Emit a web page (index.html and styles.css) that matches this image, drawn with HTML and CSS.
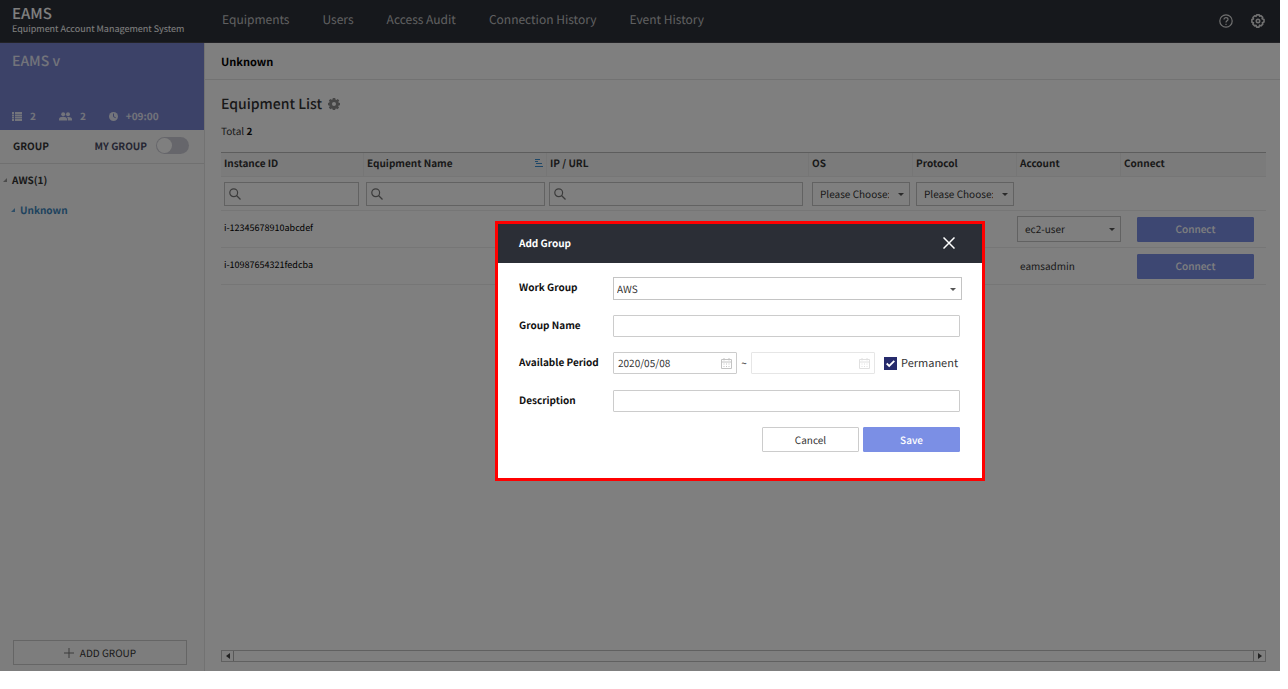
FILE: index.html
```html
<!doctype html>
<html lang="en">
  <head>
    <meta charset="UTF-8" />
    <meta name="viewport" content="width=device-width, initial-scale=1.0" />
    <title>EAMS - Equipment List</title>
    <link rel="stylesheet" href="styles.css">
  </head>
  <body>
    <div class="app">
      <header class="topbar">
        <div class="brand">
          <div class="brand-name">EAMS</div>
          <div class="brand-sub">Equipment Account Management System</div>
        </div>
        <nav class="nav">
          <a href="#">Equipments</a>
          <a href="#">Users</a>
          <a href="#">Access Audit</a>
          <a href="#">Connection History</a>
          <a href="#">Event History</a>
        </nav>
        <div class="top-icons">
          <button type="button" aria-label="Help">
            <svg width="14" height="14" viewBox="0 0 14 14" fill="none" stroke="currentColor" stroke-width="1.2">
              <circle cx="7" cy="7" r="6.2" />
              <path d="M5 5.6c0-1.300.9-2 2-2s2 .8 2 1.800c0 1.400-2 1.500-2 3.100" />
              <path d="M7 9.700v1.200" />
            </svg>
          </button>
          <button type="button" aria-label="Settings">
            <svg width="14" height="14" viewBox="0 0 14 14" fill="none" stroke="currentColor" stroke-width="1.600" stroke-linejoin="round">
              <path d="M5.700.9h2.600l.4 1.300 1.200-.6 1.800 1.800-.6 1.300 1.900.8v2.600l-1.700.6.500 1.400-1.800 1.800-1.400-.7-.6 1.900H5.600L5 11.300l-1.300.6-1.800-1.800.6-1.400L.9 8.200V5.600l1.600-.7-.6-1.400 1.800-1.800 1.300.6z" />
              <circle cx="7" cy="7" r="1.700" />
            </svg>
          </button>
        </div>
      </header>

      <div class="body">
        <aside class="sidebar">
          <div class="company">
            <div class="company-name">EAMS v</div>
            <div class="stats">
              <span class="stat">
                <svg width="10" height="9" viewBox="0 0 10 9" fill="currentColor">
                  <path d="M0 0h2v2H0zM3 0h7v2H3zM0 2.400h2v1.800H0zM3 2.400h7v1.800H3zM0 4.700h2v1.800H0zM3 4.700h7v1.800H3zM0 7h2v2H0zM3 7h7v2H3z" />
                </svg>
                2
              </span>
              <span class="stat">
                <svg width="13" height="9" viewBox="0 0 13 9" fill="currentColor">
                  <circle cx="4.200" cy="2.200" r="2" />
                  <circle cx="9" cy="2.200" r="2" />
                  <path d="M0 8.500V7c0-1.500 2-2.200 4-2.200S8 5.500 8 7v1.500zM8.800 8.500V7c0-.8-.3-1.400-.9-1.900C10.400 4.600 13 5.300 13 7v1.500z" />
                </svg>
                2
              </span>
              <span class="stat">
                <svg width="9" height="9" viewBox="0 0 9 9">
                  <circle cx="4.500" cy="4.500" r="4.500" fill="currentColor" />
                  <path d="M4.500 1.500v3.200l2.200 1" fill="none" stroke="#7884d0" stroke-width="1" />
                </svg>
                +09:00
              </span>
            </div>
          </div>
          <div class="group-bar">
            <span>GROUP</span>
            <label class="my-group">MY GROUP <input type="checkbox" class="toggle" /></label>
          </div>
          <ul class="tree">
            <li class="tree-root">AWS(1)</li>
            <li class="tree-child">Unknown</li>
          </ul>
          <button type="button" class="add-group">
            <svg width="10" height="10" viewBox="0 0 10 10" stroke="currentColor"><path d="M5 0v10M0 5h10" /></svg>
            ADD GROUP
          </button>
        </aside>

        <main class="main">
          <div class="crumb">Unknown</div>
          <div class="content">
            <h1 class="title">
              Equipment List
              <svg width="12" height="12" viewBox="0 0 12 12" fill="currentColor" fill-rule="evenodd">
                <path d="M4.800 0h2.400l.3 1.500.9.400L9.700 1 11.300 2.600l-1 1.200.4.900 1.300.2v2.300l-1.400.3-.4.900.9 1.200-1.600 1.600-1.300-.8-.8.400-.3 1.400H4.800l-.3-1.400-.8-.4-1.300.8L.8 9.600l.8-1.200-.3-.9L0 7.200V4.900l1.300-.3.3-.8-.8-1.200L2.400 1l1.300.8.800-.3zM6 4a2 2 0 100 4 2 2 0 000-4z" />
              </svg>
            </h1>
            <p class="total">Total <b>2</b></p>

            <table class="grid">
              <colgroup>
                <col class="col-id" />
                <col class="col-name" />
                <col />
                <col class="col-os" />
                <col class="col-os" />
                <col class="col-os" />
                <col class="col-connect" />
              </colgroup>
              <thead>
                <tr>
                  <th>Instance ID</th>
                  <th>
                    <div class="sorted">
                      Equipment Name
                      <svg width="8" height="8" viewBox="0 0 8 8" stroke="currentColor"><path d="M0 .5h5M0 2.500h3M1 4.500h6M0 7.500h8" /></svg>
                    </div>
                  </th>
                  <th>IP / URL</th>
                  <th>OS</th>
                  <th>Protocol</th>
                  <th>Account</th>
                  <th>Connect</th>
                </tr>
              </thead>
              <tbody>
                <tr class="filters">
                  <td>
                    <div class="search">
                      <svg width="12" height="12" viewBox="0 0 12 12" fill="none" stroke="currentColor" stroke-width="1.200"><circle cx="4.700" cy="4.700" r="3.900" /><path d="M7.500 7.500l4 4" /></svg>
                      <input type="text" aria-label="Instance ID" />
                    </div>
                  </td>
                  <td>
                    <div class="search">
                      <svg width="12" height="12" viewBox="0 0 12 12" fill="none" stroke="currentColor" stroke-width="1.200"><circle cx="4.700" cy="4.700" r="3.900" /><path d="M7.500 7.500l4 4" /></svg>
                      <input type="text" aria-label="Equipment Name" />
                    </div>
                  </td>
                  <td>
                    <div class="search">
                      <svg width="12" height="12" viewBox="0 0 12 12" fill="none" stroke="currentColor" stroke-width="1.200"><circle cx="4.700" cy="4.700" r="3.900" /><path d="M7.500 7.500l4 4" /></svg>
                      <input type="text" aria-label="IP / URL" />
                    </div>
                  </td>
                  <td>
                    <div class="select"><select aria-label="OS"><option>Please Choose:</option></select></div>
                  </td>
                  <td>
                    <div class="select"><select aria-label="Protocol"><option>Please Choose:</option></select></div>
                  </td>
                  <td></td>
                  <td></td>
                </tr>
                <tr>
                  <td class="instance">i-12345678910abcdef</td>
                  <td></td>
                  <td></td>
                  <td></td>
                  <td></td>
                  <td class="account">
                    <div class="select"><select aria-label="Account"><option>ec2-user</option></select></div>
                  </td>
                  <td class="connect"><button type="button" class="btn btn-primary">Connect</button></td>
                </tr>
                <tr>
                  <td class="instance">i-10987654321fedcba</td>
                  <td></td>
                  <td></td>
                  <td></td>
                  <td></td>
                  <td>eamsadmin</td>
                  <td class="connect"><button type="button" class="btn btn-primary">Connect</button></td>
                </tr>
              </tbody>
            </table>

            <div class="hscroll">
              <button type="button" class="hscroll-left" aria-label="Scroll left"></button>
              <div class="hscroll-track"></div>
              <button type="button" class="hscroll-right" aria-label="Scroll right"></button>
            </div>
          </div>
        </main>
      </div>

      <div class="overlay"></div>

      <section class="modal" role="dialog" aria-labelledby="modal-title">
        <header class="modal-head">
          <h2 id="modal-title">Add Group</h2>
          <button type="button" aria-label="Close">
            <svg width="12" height="12" viewBox="0 0 12 12" stroke="currentColor" stroke-width="1.500"><path d="M.5.5l11 11M11.500.5l-11 11" /></svg>
          </button>
        </header>
        <form class="form">
          <label for="work-group">Work Group</label>
          <div class="select select-wide">
            <select id="work-group"><option>AWS</option></select>
          </div>

          <label for="group-name">Group Name</label>
          <input type="text" class="text" id="group-name" />

          <label for="start-date">Available Period</label>
          <div class="period">
            <div class="date">
              <input type="text" id="start-date" value="2020/05/08" />
              <svg width="11" height="11" viewBox="0 0 11 11" fill="none" stroke="currentColor"><path d="M.5 1.500h10v9H.5zM.5 4h10M3 0v2.500M8 0v2.500" /><path d="M2.500 6h6M2.500 8.500h6" stroke-dasharray="1 1.500" /></svg>
            </div>
            <span class="tilde">~</span>
            <div class="date date-disabled">
              <input type="text" aria-label="End date" disabled />
              <svg width="11" height="11" viewBox="0 0 11 11" fill="none" stroke="currentColor"><path d="M.5 1.500h10v9H.5zM.5 4h10M3 0v2.500M8 0v2.500" /><path d="M2.500 6h6M2.500 8.500h6" stroke-dasharray="1 1.500" /></svg>
            </div>
            <label class="permanent">
              <span class="check">
                <input type="checkbox" checked />
                <svg width="9" height="9" viewBox="0 0 9 9" fill="none" stroke="#fff" stroke-width="1.800"><path d="M.7 4.500l2.500 2.500L8.300 1.800" /></svg>
              </span>
              Permanent
            </label>
          </div>

          <label for="description">Description</label>
          <input type="text" class="text" id="description" />

          <div class="actions">
            <button type="button" class="btn">Cancel</button>
            <button type="button" class="btn btn-primary">Save</button>
          </div>
        </form>
      </section>
    </div>
  </body>
</html>
```
FILE: styles.css
```css
* {
  box-sizing: border-box;
}
body {
  margin: 0;
  background: #fff;
  color: #333;
  font: 10px/16px "Noto Sans CJK KR", "Noto Sans", sans-serif;
  text-rendering: geometricPrecision;
}
button,
input,
select {
  font: inherit;
  color: inherit;
  text-rendering: inherit;
  margin: 0;
  padding: 0;
  border: 0;
  background: none;
}
a {
  color: inherit;
  text-decoration: none;
}
svg {
  display: block;
  flex: none;
}
.app {
  position: relative;
  display: flex;
  flex-direction: column;
  min-height: calc(100vh - 18px);
  margin: 0 8px 18px 0;
}

/* top bar */
.topbar {
  display: flex;
  height: 43px;
  padding: 0 15px 0 12px;
  background: #2c3038;
  border-bottom: 1px solid #45454c;
  color: #fff;
}
.brand {
  width: 210px;
  padding-top: 4px;
}
.brand-name {
  font-size: 15px;
  line-height: 20px;
  font-weight: 500;
}
.brand-sub {
  font-size: 9px;
  line-height: 9px;
  white-space: nowrap;
}
.nav {
  display: flex;
  flex: 1;
  gap: 33px;
  padding-top: 12px;
  font-size: 12px;
  color: #c0c0c2;
}
.top-icons {
  display: flex;
  align-items: center;
  gap: 18px;
  color: #e0e0e0;
}

.body {
  display: flex;
  flex: 1;
}

/* sidebar */
.sidebar {
  display: flex;
  flex-direction: column;
  width: 205px;
  background: #fafafa;
  border-right: 1px solid #e4e4e4;
}
.company {
  display: flex;
  flex-direction: column;
  justify-content: space-between;
  height: 87px;
  padding: 10px 12px 6px;
  background: #7884d0;
  color: #e6e8f6;
}
.company-name {
  font-size: 14px;
  font-weight: 500;
}
.stats {
  display: flex;
  gap: 23px;
  font-weight: 700;
}
.stat {
  display: flex;
  align-items: center;
  gap: 8px;
}
.group-bar {
  display: flex;
  align-items: center;
  justify-content: space-between;
  height: 34px;
  padding: 0 15px 2px 13px;
  border-bottom: 1px solid #e0e0e0;
  font-weight: 700;
}
.my-group {
  display: flex;
  align-items: center;
  gap: 9px;
  color: #4a4c66;
}
.toggle {
  appearance: none;
  width: 33px;
  height: 17px;
  padding: 1px;
  border-radius: 9px;
  background: #cdcdd6;
}
.toggle::before {
  content: "";
  display: block;
  width: 15px;
  height: 15px;
  border-radius: 50%;
  background: #fff;
}
.tree {
  display: flex;
  flex-direction: column;
  flex: 1;
  gap: 14px;
  margin: 0;
  padding: 8px 0 0 3px;
  list-style: none;
  font-weight: 700;
}
.tree li {
  display: flex;
  align-items: center;
  gap: 5px;
}
.tree li::before {
  content: "";
  border-left: 4px solid transparent;
  border-bottom: 4px solid #999;
}
.tree .tree-child {
  padding-left: 8px;
  color: #3f87bd;
}
.tree .tree-child::before {
  border-bottom-color: #5f9fd0;
}
.add-group {
  display: flex;
  align-items: center;
  justify-content: center;
  gap: 6px;
  height: 25px;
  margin: 0 17px 6px 13px;
  border: 1px solid #cacaca;
}
.add-group svg {
  color: #777;
}

/* main area */
.main {
  display: flex;
  flex-direction: column;
  flex: 1;
  min-width: 0;
}
.crumb {
  height: 37px;
  padding: 11px 16px 0;
  border-bottom: 1px solid #e4e4e4;
  font-size: 11px;
  font-weight: 700;
  color: #000;
}
.content {
  display: flex;
  flex-direction: column;
  flex: 1;
  padding: 16px 14px 9px 16px;
}
.title {
  display: flex;
  align-items: center;
  gap: 6px;
  margin: 0 0 11px;
  font-size: 14px;
  font-weight: 500;
}
.title svg {
  color: #8c8c8c;
}
.total {
  margin: 0 0 13px;
}
.total b {
  color: #111;
}

.grid {
  width: 100%;
  table-layout: fixed;
  border-collapse: separate;
  border-spacing: 0;
  border-top: 1px solid #bbb;
}
.col-id {
  width: 143px;
}
.col-name {
  width: 183px;
}
.col-os {
  width: 104px;
}
.col-connect {
  width: 145px;
}
.grid th,
.grid td {
  padding: 0 3px;
  border-bottom: 1px solid #ececec;
  text-align: left;
}
.grid th {
  height: 24px;
  padding-bottom: 3px;
  background: #f6f6f6;
  border-right: 1px solid #ececec;
  font-weight: 700;
}
.grid th:last-child {
  border-right: 0;
}
.grid tbody tr {
  height: 37px;
}
.grid tbody .filters {
  height: 34px;
}
.filters td:first-child {
  padding-right: 5px;
}
.filters td:nth-child(2) {
  padding: 0 2px;
}
.filters td:nth-child(3) {
  padding: 0 6px 0 2px;
}
.grid .account {
  padding: 0;
}
.grid .connect {
  padding: 0 12px 0 16px;
}
.connect .btn {
  width: 100%;
}
.grid .instance {
  padding-bottom: 2px;
  font-size: 9px;
  color: #000;
}
.sorted {
  display: flex;
  align-items: center;
  justify-content: space-between;
}
.sorted svg {
  color: #3d8fd1;
}
.search {
  display: flex;
  align-items: center;
  gap: 4px;
  height: 24px;
  padding-left: 4px;
  border: 1px solid #c4c4c4;
  color: #777;
}
.search input {
  flex: 1;
  min-width: 0;
  height: 100%;
}

/* drop-downs */
.select {
  position: relative;
  height: 24px;
  border: 1px solid #c4c4c4;
}
.select select {
  appearance: none;
  display: block;
  width: 100%;
  height: 100%;
  padding: 0 20px 0 7px;
}
.select::after {
  content: "";
  position: absolute;
  top: 50%;
  right: 5px;
  margin-top: -1px;
  border: 3px solid transparent;
  border-top-color: #555;
  border-bottom: 0;
  pointer-events: none;
}
.account .select {
  height: 26px;
}

.btn {
  height: 25px;
  border: 1px solid #ccc;
  border-radius: 1px;
  background: #fff;
}
.btn-primary {
  border-color: #7b8fe5;
  background: #7b8fe5;
  color: #fff;
  font-weight: 500;
}

/* horizontal scroll bar under the table */
.hscroll {
  display: flex;
  height: 12px;
  margin-top: auto;
  border: 1px solid #c0c0c0;
}
.hscroll-track {
  flex: 1;
}
.hscroll button {
  display: flex;
  align-items: center;
  justify-content: center;
  width: 12px;
}
.hscroll button::before {
  content: "";
  border: 3px solid transparent;
}
.hscroll .hscroll-left {
  border-right: 1px solid #b0b0b0;
}
.hscroll .hscroll-right {
  border-left: 1px solid #b0b0b0;
}
.hscroll .hscroll-left::before {
  border-right: 4px solid #444;
  border-left: 0;
}
.hscroll .hscroll-right::before {
  border-left: 4px solid #444;
  border-right: 0;
}

/* add group dialog */
.overlay {
  position: absolute;
  inset: 0;
  background: rgba(0, 0, 0, 0.5);
}
.modal {
  position: absolute;
  top: 221px;
  left: 495px;
  width: 490px;
  border: 3px solid #f00;
  background: #fff;
  color: #333;
}
.modal-head {
  display: flex;
  align-items: center;
  justify-content: space-between;
  height: 39px;
  padding: 0 27px 1px 21px;
  background: #2b2e36;
  color: #fff;
}
.modal-head h2 {
  margin: 0;
  font-size: 10px;
  font-weight: 700;
}
.form {
  display: grid;
  grid-template-columns: 94px 1fr;
  row-gap: 15px;
  padding: 14px 22px 26px 21px;
}
.form > label {
  line-height: 20px;
  font-weight: 700;
  color: #111;
}
.form .select-wide {
  height: 23px;
  margin-right: -2px;
}
.form .select-wide select {
  padding-left: 3px;
}
.text,
.date {
  height: 22px;
  border: 1px solid #ccc;
  border-radius: 1px;
}
.period {
  display: flex;
  height: 23px;
}
.date {
  display: flex;
  align-items: center;
  width: 124px;
  padding: 0 4px;
}
.date input {
  flex: 1;
  min-width: 0;
}
.date svg {
  color: #c4c4c4;
}
.date-disabled {
  border-color: #e6e6e6;
}
.date-disabled svg {
  color: #e0e0e0;
}
.tilde {
  width: 14px;
  text-align: center;
  line-height: 22px;
}
.permanent {
  display: flex;
  align-items: center;
  gap: 4px;
  height: 22px;
  margin-left: 9px;
  font-size: 11px;
}
.check {
  position: relative;
  display: flex;
}
.check input {
  appearance: none;
  width: 13px;
  height: 13px;
  background: #262b6c;
}
.check svg {
  position: absolute;
  top: 2px;
  left: 2px;
  pointer-events: none;
}
.actions {
  grid-column: 1 / -1;
  display: flex;
  justify-content: flex-end;
  gap: 4px;
}
.actions .btn {
  width: 97px;
}
```
